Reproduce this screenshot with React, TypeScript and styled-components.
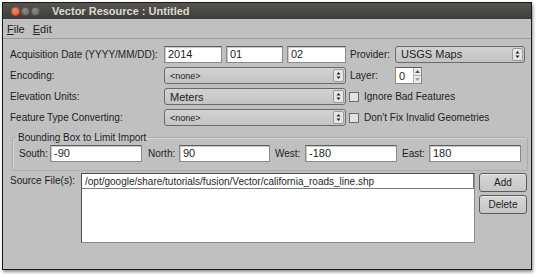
import React from "react";
import styled, { createGlobalStyle } from "styled-components";

const GlobalStyle = createGlobalStyle`
  html, body {
    margin: 0;
    padding: 0;
    background: #ffffff;
  }
  body {
    font-family: "Liberation Sans", Arial, sans-serif;
    font-size: 10px;
    color: #1e1e1e;
  }
`;

const Page = styled.div`
  width: 540px;
  height: 277px;
  padding: 2px 0 0 2px;
  box-sizing: border-box;
`;

const Window = styled.div`
  width: 530px;
  height: 268px;
  box-sizing: border-box;
  border: 1px solid #1a1a1a;
  background: #c0c0c0;
  box-shadow: 1px 2px 3px rgba(0, 0, 0, 0.45);
  display: flex;
  flex-direction: column;
`;

const TitleBar = styled.div`
  height: 16px;
  background: linear-gradient(#56554f, #3e3d39);
  display: flex;
  align-items: center;
  padding-left: 8px;
  gap: 1px;
`;

const Dot = styled.span<{ $close?: boolean }>`
  width: 9px;
  height: 9px;
  border-radius: 50%;
  background: ${(p) =>
    p.$close
      ? "radial-gradient(circle at 40% 35%, #f58a5f, #d9501e)"
      : "radial-gradient(circle at 40% 35%, #8d8c86, #5c5b56)"};
  box-shadow: inset 0 0 0 1px rgba(0, 0, 0, 0.25);
`;

const Title = styled.span`
  margin-left: 11px;
  color: #dcd9d2;
  font-weight: bold;
  font-size: 11px;
`;

const MenuBar = styled.div`
  height: 19px;
  border-bottom: 1px solid #9c9c9c;
  display: flex;
  align-items: center;
  gap: 8px;
  padding-left: 4px;
  font-size: 11px;
`;

const MenuItem = styled.span`
  color: #222;
  & u {
    text-decoration: underline;
  }
`;

const Body = styled.div`
  flex: 1;
  padding: 4px 4px 0 7px;
  display: flex;
  flex-direction: column;
`;

const Row = styled.div<{ $h?: number }>`
  display: flex;
  align-items: center;
  height: ${(p) => p.$h ?? 21}px;
`;

const Label = styled.span<{ $w: number; $ml?: number }>`
  width: ${(p) => p.$w}px;
  margin-left: ${(p) => p.$ml ?? 0}px;
  flex-shrink: 0;
  white-space: nowrap;
`;

const TextInput = styled.div<{ $w: number; $ml?: number }>`
  width: ${(p) => p.$w}px;
  margin-left: ${(p) => p.$ml ?? 0}px;
  height: 17px;
  box-sizing: border-box;
  background: #fff;
  border: 1px solid #8a8a8a;
  border-top-color: #5e5e5e;
  box-shadow: inset 1px 1px 0 #c8c8c8;
  padding-left: 3px;
  display: flex;
  align-items: center;
  white-space: nowrap;
  overflow: hidden;
  font-size: 11px;
`;

const Select = styled.div<{ $w: number }>`
  width: ${(p) => p.$w}px;
  height: 17px;
  box-sizing: border-box;
  border: 1px solid #6a6a6a;
  border-radius: 3px;
  background: linear-gradient(#d2d2d2, #c4c4c4);
  display: flex;
  align-items: center;
  padding-left: 5px;
`;

const SelectText = styled.span<{ $big?: boolean }>`
  flex: 1;
  font-size: ${(p) => (p.$big ? 11 : 9)}px;
`;

const ArrowBox = styled.span`
  width: 11px;
  height: 13px;
  margin-right: 1px;
  border-radius: 2px;
  background: #e6e6e6;
  border: 1px solid #9a9a9a;
  box-sizing: border-box;
  display: flex;
  align-items: center;
  justify-content: center;
`;

const Spin = styled.div`
  width: 27px;
  height: 17px;
  box-sizing: border-box;
  background: #fff;
  border: 1px solid #8a8a8a;
  border-top-color: #5e5e5e;
  display: flex;
  align-items: center;
  padding-left: 3px;
  font-size: 11px;
`;

const SpinArrows = styled.span`
  margin-left: auto;
  width: 7px;
  height: 15px;
  border-left: 1px solid #b0b0b0;
  display: flex;
  flex-direction: column;
  background: #ececec;
`;

const SpinHalf = styled.span<{ $down?: boolean }>`
  flex: 1;
  display: flex;
  align-items: center;
  justify-content: center;
  border-top: ${(p) => (p.$down ? "1px solid #b0b0b0" : "none")};
`;

const Check = styled.span`
  width: 8px;
  height: 8px;
  border: 1px solid #6c6c6c;
  background: #e2e2e2;
  margin: 0 5px 0 3px;
  flex-shrink: 0;
`;

const Group = styled.fieldset`
  margin: 4px 4px 0 2px;
  padding: 0 6px 3px 6px;
  border: 1px solid #acacac;
  border-radius: 2px;
  box-shadow: inset 1px 1px 0 #d2d2d2;
  height: 34px;
`;

const Legend = styled.legend`
  padding: 0 2px;
  margin-left: -3px;
  font-size: 10px;
`;

const BoxRow = styled.div`
  display: flex;
  align-items: center;
  height: 20px;
`;

const Coord = styled.span<{ $w: number; $ml?: number }>`
  width: ${(p) => p.$w}px;
  margin-left: ${(p) => p.$ml ?? 0}px;
  flex-shrink: 0;
`;

const SourceArea = styled.div`
  display: flex;
  margin-top: 2px;
  align-items: flex-start;
`;

const SourceLabel = styled.span`
  width: 71px;
  padding-top: 2px;
  flex-shrink: 0;
`;

const ListBox = styled.div`
  width: 394px;
  height: 70px;
  box-sizing: border-box;
  background: #fff;
  border: 1px solid #8a8a8a;
  border-top-color: #4e4e4e;
  border-left-color: #4e4e4e;
`;

const ListItem = styled.div`
  height: 15px;
  box-sizing: border-box;
  border: 1px solid #7a7a7a;
  border-top: none;
  border-left: none;
  padding-left: 3px;
  display: flex;
  align-items: center;
  white-space: nowrap;
`;

const Buttons = styled.div`
  display: flex;
  flex-direction: column;
  gap: 3px;
  margin-left: 4px;
`;

const Button = styled.div`
  width: 48px;
  height: 19px;
  box-sizing: border-box;
  border: 1px solid #5a5a5a;
  border-radius: 3px;
  background: linear-gradient(#d6d6d6, #c6c6c6);
  box-shadow: inset 0 1px 0 #e8e8e8;
  display: flex;
  align-items: center;
  justify-content: center;
  font-size: 10px;
`;

const Arrows = () => (
  <ArrowBox>
    <svg width="5" height="9" viewBox="0 0 5 9">
      <path d="M0.5 3.5 L2.5 1 L4.5 3.5 Z" fill="#222" />
      <path d="M0.5 5.5 L2.5 8 L4.5 5.5 Z" fill="#222" />
    </svg>
  </ArrowBox>
);

const Dropdown = ({ w, value, big }: { w: number; value: string; big?: boolean }) => (
  <Select $w={w}>
    <SelectText $big={big}>{value}</SelectText>
    <Arrows />
  </Select>
);

const App = () => {
  return (
    <Page>
      <GlobalStyle />
      <Window>
        <TitleBar>
          <Dot $close />
          <Dot />
          <Dot />
          <Title>Vector Resource : Untitled</Title>
        </TitleBar>
        <MenuBar>
          <MenuItem>
            <u>F</u>ile
          </MenuItem>
          <MenuItem>
            <u>E</u>dit
          </MenuItem>
        </MenuBar>
        <Body>
          <Row $h={22}>
            <Label $w={154}>Acquisition Date (YYYY/MM/DD):</Label>
            <TextInput $w={58}>2014</TextInput>
            <TextInput $w={57} $ml={4}>01</TextInput>
            <TextInput $w={59} $ml={4}>02</TextInput>
            <Label $w={45} $ml={4}>Provider:</Label>
            <Dropdown w={130} value="USGS Maps" big />
          </Row>
          <Row>
            <Label $w={154}>Encoding:</Label>
            <Dropdown w={182} value="<none>" />
            <Label $w={45} $ml={4}>Layer:</Label>
            <Spin>
              0
              <SpinArrows>
                <SpinHalf>
                  <svg width="5" height="3" viewBox="0 0 5 3">
                    <path d="M0 3 L2.5 0 L5 3 Z" fill="#555" />
                  </svg>
                </SpinHalf>
                <SpinHalf $down>
                  <svg width="5" height="3" viewBox="0 0 5 3">
                    <path d="M0 0 L2.5 3 L5 0 Z" fill="#999" />
                  </svg>
                </SpinHalf>
              </SpinArrows>
            </Spin>
          </Row>
          <Row>
            <Label $w={154}>Elevation Units:</Label>
            <Dropdown w={182} value="Meters" big />
            <Check />
            <span>Ignore Bad Features</span>
          </Row>
          <Row>
            <Label $w={154}>Feature Type Converting:</Label>
            <Dropdown w={182} value="<none>" />
            <Check />
            <span>Don't Fix Invalid Geometries</span>
          </Row>
          <Group>
            <Legend>Bounding Box to Limit Import</Legend>
            <BoxRow>
              <Coord $w={31}>South:</Coord>
              <TextInput $w={92}>-90</TextInput>
              <Coord $w={31} $ml={6}>North:</Coord>
              <TextInput $w={91}>90</TextInput>
              <Coord $w={30} $ml={5}>West:</Coord>
              <TextInput $w={92}>-180</TextInput>
              <Coord $w={27} $ml={5}>East:</Coord>
              <TextInput $w={92}>180</TextInput>
            </BoxRow>
          </Group>
          <SourceArea>
            <SourceLabel>Source File(s):</SourceLabel>
            <ListBox>
              <ListItem>/opt/google/share/tutorials/fusion/Vector/california_roads_line.shp</ListItem>
            </ListBox>
            <Buttons>
              <Button>Add</Button>
              <Button>Delete</Button>
            </Buttons>
          </SourceArea>
        </Body>
      </Window>
    </Page>
  );
};

export default App;
